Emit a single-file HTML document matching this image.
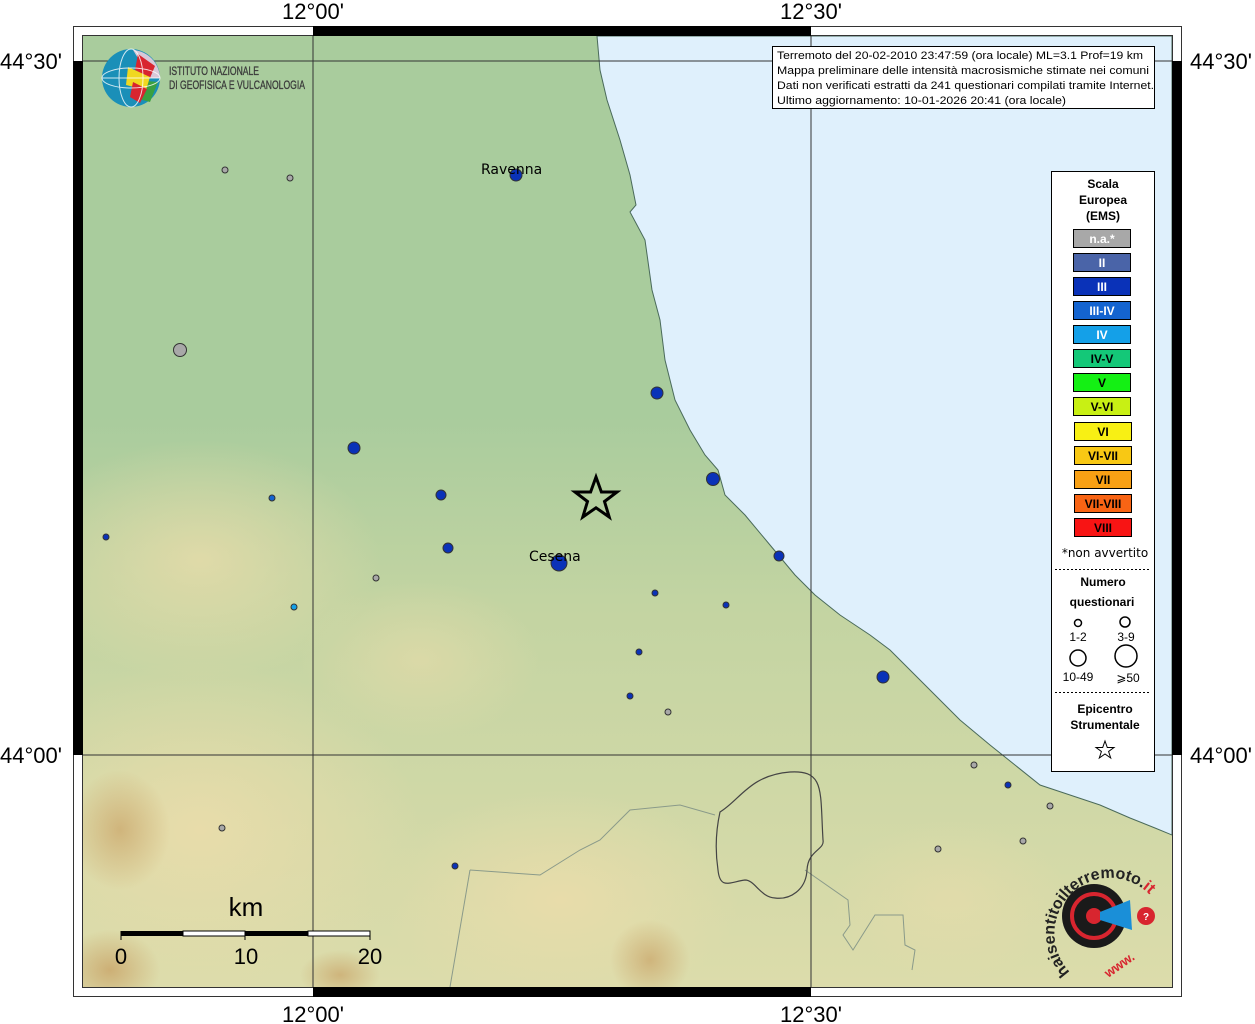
<!DOCTYPE html>
<html><head><meta charset="utf-8"><style>
html,body{margin:0;padding:0;background:#fff;width:1255px;height:1024px;overflow:hidden}
svg{display:block}
text{font-family:"Liberation Sans","DejaVu Sans",sans-serif}
.dj{font-family:"DejaVu Sans","Liberation Sans",sans-serif}
</style></head><body>
<svg width="1255" height="1024" viewBox="0 0 1255 1024" xmlns="http://www.w3.org/2000/svg">
<defs>
<clipPath id="cp"><rect x="83" y="36" width="1089" height="951"/></clipPath>
<radialGradient id="m1" cx="0.5" cy="0.5" r="0.5"><stop offset="0" stop-color="#e8dcaa"/><stop offset="1" stop-color="#e8dcaa" stop-opacity="0"/></radialGradient>
<radialGradient id="m2" cx="0.5" cy="0.5" r="0.5"><stop offset="0" stop-color="#c9a468"/><stop offset="1" stop-color="#c9a468" stop-opacity="0"/></radialGradient>
<linearGradient id="lg" x1="0" y1="0" x2="0" y2="1"><stop offset="0" stop-color="#a9cc9d"/><stop offset="0.4" stop-color="#a9cc9d"/><stop offset="0.6" stop-color="#c3d4a2"/><stop offset="1" stop-color="#dcdcab"/></linearGradient>
</defs>
<g clip-path="url(#cp)">
<rect x="83" y="36" width="1089" height="951" fill="url(#lg)"/>
<ellipse cx="200" cy="560" rx="180" ry="120" fill="url(#m1)" opacity="0.8"/>
<ellipse cx="200" cy="830" rx="220" ry="170" fill="url(#m1)"/>
<ellipse cx="560" cy="900" rx="180" ry="110" fill="url(#m1)"/>
<ellipse cx="420" cy="660" rx="120" ry="80" fill="url(#m1)" opacity="0.6"/>
<ellipse cx="120" cy="830" rx="50" ry="60" fill="url(#m2)" opacity="0.7"/>
<ellipse cx="110" cy="970" rx="50" ry="40" fill="url(#m2)" opacity="0.8"/>
<ellipse cx="650" cy="960" rx="40" ry="40" fill="url(#m2)" opacity="0.7"/>
<ellipse cx="340" cy="975" rx="40" ry="25" fill="url(#m2)" opacity="0.7"/>
<ellipse cx="950" cy="900" rx="120" ry="80" fill="url(#m1)" opacity="0.6"/>
<path d="M597,36 L600,70 L607,100 L620,140 L630,175 L636,205 L630,212 L645,240 L652,290 L660,320 L665,360 L675,400 L690,430 L705,455 L718,470 L725,495 L745,515 L770,545 L795,575 L815,595 L840,615 L870,635 L890,650 L905,665 L930,690 L960,720 L990,745 L1015,765 L1040,785 L1070,795 L1100,805 L1130,818 L1155,828 L1172,835 L1172,36 Z" fill="#dff0fc" stroke="#4a6a5a" stroke-width="1"/>
<path d="M470,870 L540,875 L580,850 L600,840 L630,810 L680,805 L715,815" fill="none" stroke="#8a9a8a" stroke-width="1"/>
<path d="M470,870 L450,987" fill="none" stroke="#8a9a8a" stroke-width="1"/>
<path d="M805,870 L848,900 L850,925 L843,935 L853,950 L875,915 L903,915 L905,945 L915,950 L912,970" fill="none" stroke="#8a9a8a" stroke-width="1"/>
<path d="M720,812 C740,800 750,775 790,772 C825,770 820,790 823,840 C825,850 808,850 807,870 C806,890 790,900 775,898 C760,897 755,880 745,880 C730,882 720,890 718,870 C715,850 716,830 720,812 Z" fill="none" stroke="#444" stroke-width="1.2"/>
</g>
<line x1="313" y1="36" x2="313" y2="987" stroke="#333" stroke-width="1"/>
<line x1="811" y1="36" x2="811" y2="987" stroke="#333" stroke-width="1"/>
<line x1="83" y1="61" x2="1172" y2="61" stroke="#333" stroke-width="1"/>
<line x1="83" y1="755" x2="1172" y2="755" stroke="#333" stroke-width="1"/>
<rect x="73.5" y="26.5" width="1108" height="970" fill="none" stroke="#333" stroke-width="1"/>
<rect x="82.5" y="35.5" width="1090" height="952" fill="none" stroke="#333" stroke-width="1"/>
<rect x="313" y="26" width="498" height="10" fill="#000"/>
<rect x="313" y="987" width="498" height="10" fill="#000"/>
<rect x="73" y="61" width="10" height="694" fill="#000"/>
<rect x="1172" y="61" width="10" height="694" fill="#000"/>
<g font-size="22" fill="#000">
<text x="313" y="19" text-anchor="middle">12°00'</text>
<text x="811" y="19" text-anchor="middle">12°30'</text>
<text x="313" y="1022" text-anchor="middle">12°00'</text>
<text x="811" y="1022" text-anchor="middle">12°30'</text>
<text x="0" y="69">44°30'</text>
<text x="1190" y="69">44°30'</text>
<text x="0" y="763">44°00'</text>
<text x="1190" y="763">44°00'</text>
</g>
<circle cx="131" cy="78" r="29" fill="#1a8fb8"/>
<path d="M133,50 A29,29 0 0 1 160,78 L150,78 Z" fill="#d8c8d8"/>
<path d="M138,54 L155,66 L150,78 L135,70 Z" fill="#d8252f"/>
<path d="M135,80 L158,82 L150,102 L132,97 Z" fill="#3aa040"/>
<path d="M128,67 L150,77 L146,90 L126,85 Z" fill="#f0d820"/>
<path d="M133,82 L147,89 L140,103 L130,97 Z" fill="#d8252f"/>
<g stroke="#fff" stroke-width="1" fill="none" opacity="0.8"><ellipse cx="131" cy="78" rx="29" ry="10"/><ellipse cx="131" cy="78" rx="12" ry="29"/><line x1="102" y1="78" x2="160" y2="78"/></g>
<text x="169" y="75" font-size="12" fill="#3a3a3a" textLength="90" lengthAdjust="spacingAndGlyphs" stroke="#3a3a3a" stroke-width="0.3">ISTITUTO NAZIONALE</text>
<text x="169" y="89" font-size="12" fill="#3a3a3a" textLength="136" lengthAdjust="spacingAndGlyphs" stroke="#3a3a3a" stroke-width="0.3">DI GEOFISICA E VULCANOLOGIA</text>
<rect x="772.5" y="46.5" width="382" height="62" fill="#fff" stroke="#000" stroke-width="1"/>
<g font-size="11" fill="#000" class="dj">
<text x="777" y="59" textLength="366" lengthAdjust="spacingAndGlyphs">Terremoto del 20-02-2010 23:47:59 (ora locale) ML=3.1 Prof=19 km</text>
<text x="777" y="74" textLength="372" lengthAdjust="spacingAndGlyphs">Mappa preliminare delle intensità macrosismiche stimate nei comuni</text>
<text x="777" y="89" textLength="377" lengthAdjust="spacingAndGlyphs">Dati non verificati estratti da 241 questionari compilati tramite Internet.</text>
<text x="777" y="104" textLength="289" lengthAdjust="spacingAndGlyphs">Ultimo aggiornamento: 10-01-2026 20:41 (ora locale)</text>
</g>
<rect x="1051.5" y="171.5" width="103" height="600" fill="#fff" stroke="#000" stroke-width="1"/>
<g font-size="12" font-weight="bold" text-anchor="middle" fill="#000" class="dj">
<text x="1103" y="188">Scala</text><text x="1103" y="204">Europea</text><text x="1103" y="220">(EMS)</text>
</g>
<g stroke="#000" stroke-width="1" font-size="12" font-weight="bold" text-anchor="middle" class="dj">
<rect x="1073.5" y="229.5" width="57" height="18" fill="#a8a8a8"/><text x="1102" y="243" fill="#fff" stroke="none">n.a.*</text>
<rect x="1073.5" y="253.5" width="57" height="18" fill="#4a64a8"/><text x="1102" y="267" fill="#fff" stroke="none">II</text>
<rect x="1073.5" y="277.5" width="57" height="18" fill="#0a32b8"/><text x="1102" y="291" fill="#fff" stroke="none">III</text>
<rect x="1073.5" y="301.5" width="57" height="18" fill="#1464d0"/><text x="1102" y="315" fill="#fff" stroke="none">III-IV</text>
<rect x="1073.5" y="325.5" width="57" height="18" fill="#14a0e8"/><text x="1102" y="339" fill="#fff" stroke="none">IV</text>
<rect x="1073.5" y="349.5" width="57" height="18" fill="#14c878"/><text x="1102" y="363" fill="#000" stroke="none">IV-V</text>
<rect x="1073.5" y="373.5" width="57" height="18" fill="#14f014"/><text x="1102" y="387" fill="#000" stroke="none">V</text>
<rect x="1073.5" y="397.5" width="57" height="18" fill="#c8f014"/><text x="1102" y="411" fill="#000" stroke="none">V-VI</text>
<rect x="1074.5" y="422.5" width="57" height="18" fill="#f8f014"/><text x="1103" y="436" fill="#000" stroke="none">VI</text>
<rect x="1074.5" y="446.5" width="57" height="18" fill="#f8c814"/><text x="1103" y="460" fill="#000" stroke="none">VI-VII</text>
<rect x="1074.5" y="470.5" width="57" height="18" fill="#f8a014"/><text x="1103" y="484" fill="#000" stroke="none">VII</text>
<rect x="1074.5" y="494.5" width="57" height="18" fill="#f86414"/><text x="1103" y="508" fill="#000" stroke="none">VII-VIII</text>
<rect x="1074.5" y="518.5" width="57" height="18" fill="#f81414"/><text x="1103" y="532" fill="#000" stroke="none">VIII</text>
</g>
<text x="1105" y="557" font-size="12" text-anchor="middle" class="dj">*non avvertito</text>
<line x1="1055" y1="569.5" x2="1151" y2="569.5" stroke="#000" stroke-dasharray="2,2"/>
<g font-size="12" font-weight="bold" text-anchor="middle" class="dj"><text x="1103" y="586">Numero</text><text x="1102" y="606">questionari</text></g>
<g fill="none" stroke="#000" stroke-width="1.5"><circle cx="1078" cy="623" r="3.5"/><circle cx="1125" cy="622" r="5"/><circle cx="1078" cy="658" r="8"/><circle cx="1126" cy="656" r="11"/></g>
<g font-size="12" text-anchor="middle" class="dj"><text x="1078" y="641">1-2</text><text x="1126" y="641">3-9</text><text x="1078" y="681">10-49</text><text x="1128" y="682">⩾50</text></g>
<line x1="1055" y1="692.5" x2="1151" y2="692.5" stroke="#000" stroke-dasharray="2,2"/>
<g font-size="12" font-weight="bold" text-anchor="middle" class="dj"><text x="1105" y="713">Epicentro</text><text x="1105" y="729">Strumentale</text></g>
<path d="M1105,741 L1107.3,747.5 L1114,747.5 L1108.6,751.5 L1110.7,758 L1105,754 L1099.3,758 L1101.4,751.5 L1096,747.5 L1102.7,747.5 Z" fill="none" stroke="#000" stroke-width="1"/>
<g stroke="#333" stroke-width="1">
<circle cx="516" cy="175" r="6" fill="#0a32b8"/>
<circle cx="225" cy="170" r="3" fill="#a8a8a8"/>
<circle cx="290" cy="178" r="3" fill="#a8a8a8"/>
<circle cx="180" cy="350" r="6.5" fill="#a8a8a8"/>
<circle cx="657" cy="393" r="6" fill="#0a32b8"/>
<circle cx="354" cy="448" r="6" fill="#0a32b8"/>
<circle cx="713" cy="479" r="6.5" fill="#0a32b8"/>
<circle cx="441" cy="495" r="5" fill="#0a32b8"/>
<circle cx="272" cy="498" r="3" fill="#1464d0"/>
<circle cx="106" cy="537" r="3" fill="#0a32b8"/>
<circle cx="448" cy="548" r="5" fill="#0a32b8"/>
<circle cx="559" cy="563" r="8" fill="#0a32b8"/>
<circle cx="779" cy="556" r="5" fill="#0a32b8"/>
<circle cx="376" cy="578" r="3" fill="#a8a8a8"/>
<circle cx="655" cy="593" r="3" fill="#0a32b8"/>
<circle cx="294" cy="607" r="3" fill="#14a0e8"/>
<circle cx="726" cy="605" r="3" fill="#0a32b8"/>
<circle cx="639" cy="652" r="3" fill="#0a32b8"/>
<circle cx="883" cy="677" r="6" fill="#0a32b8"/>
<circle cx="630" cy="696" r="3" fill="#0a32b8"/>
<circle cx="668" cy="712" r="3" fill="#a8a8a8"/>
<circle cx="974" cy="765" r="3" fill="#a8a8a8"/>
<circle cx="1008" cy="785" r="3" fill="#0a32b8"/>
<circle cx="1050" cy="806" r="3" fill="#a8a8a8"/>
<circle cx="222" cy="828" r="3" fill="#a8a8a8"/>
<circle cx="938" cy="849" r="3" fill="#a8a8a8"/>
<circle cx="1023" cy="841" r="3" fill="#a8a8a8"/>
<circle cx="455" cy="866" r="3" fill="#0a32b8"/>
</g>
<text x="481" y="174" font-size="14" fill="#000" class="dj">Ravenna</text>
<text x="529" y="561" font-size="14" fill="#000" class="dj">Cesena</text>
<path d="M596,477 L601.4,492 L617,492 L604.5,501.5 L609.2,517 L596,507.8 L582.8,517 L587.5,501.5 L575,492 L590.6,492 Z" fill="none" stroke="#000" stroke-width="3"/>
<text x="246" y="916" font-size="26" text-anchor="middle">km</text>
<rect x="121" y="931" width="62" height="5" fill="#000"/>
<rect x="183" y="931" width="62" height="5" fill="#fff" stroke="#000" stroke-width="1"/>
<rect x="245" y="931" width="63" height="5" fill="#000"/>
<rect x="308" y="931" width="62" height="5" fill="#fff" stroke="#000" stroke-width="1"/>
<g stroke="#000"><line x1="121" y1="931" x2="121" y2="940"/><line x1="245" y1="931" x2="245" y2="940"/><line x1="370" y1="931" x2="370" y2="940"/></g>
<g font-size="22" text-anchor="middle"><text x="121" y="964">0</text><text x="246" y="964">10</text><text x="370" y="964">20</text></g>
<circle cx="1094" cy="916" r="32" fill="#1a1a1a"/>
<circle cx="1094" cy="916" r="22" fill="none" stroke="#d8252f" stroke-width="4"/>
<circle cx="1094" cy="916" r="8" fill="#d8252f"/>
<path d="M1100,912 L1130,900 L1132,930 L1100,920 Z" fill="#1a8fd8"/>
<circle cx="1146" cy="916" r="9" fill="#d8252f"/>
<text x="1146" y="920" font-size="10" fill="#fff" text-anchor="middle" font-weight="bold">?</text>
<path id="arc" d="M1070,972 A52,52 0 1 1 1150,895" fill="none"/>
<text font-size="16" fill="#222" font-weight="bold"><textPath href="#arc">haisentitoilterremoto.<tspan fill="#d8252f">it</tspan></textPath></text>
<text x="1100" y="968" font-size="13" fill="#d8252f" font-weight="bold" transform="rotate(-35 1120 960)">www.</text>
</svg>
</body></html>
